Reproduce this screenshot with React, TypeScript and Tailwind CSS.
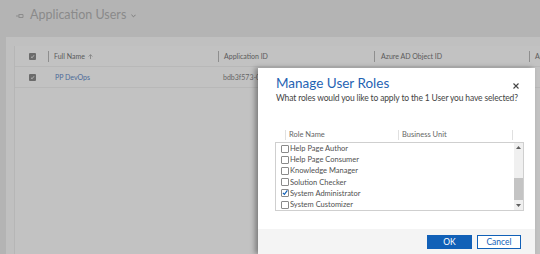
import React from 'react';

const roles = [
  { name: 'Help Page Author', checked: false },
  { name: 'Help Page Consumer', checked: false },
  { name: 'Knowledge Manager', checked: false },
  { name: 'Solution Checker', checked: false },
  { name: 'System Administrator', checked: true },
  { name: 'System Customizer', checked: false },
];

const DimCheck: React.FC = () => (
  <div className="w-[7px] h-[7px] bg-[#6b6b6b] rounded-[1px] flex items-center justify-center">
    <svg width="5" height="5" viewBox="0 0 10 10">
      <path d="M2 5.5 L4.2 7.5 L8 2.5" stroke="#c8c8c8" strokeWidth="1.6" fill="none" />
    </svg>
  </div>
);

const RoleBox: React.FC<{ checked: boolean }> = ({ checked }) => (
  <div className="w-[8px] h-[8px] border border-[#8a8a8a] bg-white rounded-[1px] flex items-center justify-center shrink-0">
    {checked && (
      <svg width="7" height="7" viewBox="0 0 10 10" className="-mt-[1px]">
        <path d="M1.5 5.5 L4 8 L9 1.5" stroke="#1160b7" strokeWidth="2" fill="none" />
      </svg>
    )}
  </div>
);

const App: React.FC = () => {
  return (
    <div className="relative w-[540px] h-[254px] overflow-hidden bg-[#b4b4b4] font-['Lato','Segoe_UI',sans-serif] whitespace-nowrap">
      {/* page header */}
      <div className="h-[37px] flex items-center pl-[16px] pb-[7px]">
        <svg width="8" height="6" viewBox="0 0 8 6" className="mt-[2px]">
          <path d="M0 3 H3 M3 1 V5 M3 1.5 H7 V4.5 H3" stroke="#8c8c8c" strokeWidth="1" fill="none" />
        </svg>
        <span className="ml-[6px] text-[12.5px] text-[#8a8a8a]">Application Users</span>
        <svg width="5" height="4" viewBox="0 0 6 4" className="ml-[5px] mt-[1px]">
          <path d="M0.5 0.5 L3 3 L5.5 0.5" stroke="#7c7c7c" strokeWidth="1.2" fill="none" />
        </svg>
      </div>

      {/* grid panel */}
      <div className="ml-[6px] h-[217px] bg-[#c0c0c0] pl-[8px] pt-[9px]">
        <div className="h-full border-l border-[#b6b6b6] bg-[#c2c2c2]">
          <div className="h-[21px] flex items-center border-b border-[#b8b8b8] text-[7px] text-[#5a5a5a]">
            <div className="w-[33px] shrink-0 flex justify-center pl-[1px]"><DimCheck /></div>
            <div className="w-[170px] shrink-0 flex items-center gap-[5px]">
              <div className="w-px h-[11px] bg-[#8e8e8e]" />
              <span>Full Name</span>
              <svg width="5" height="5" viewBox="0 0 6 6" className="-ml-[2px]">
                <path d="M3 6 V0.8 M0.8 3 L3 0.8 L5.2 3" stroke="#7a7a7a" strokeWidth="0.9" fill="none" />
              </svg>
            </div>
            <div className="w-[156px] shrink-0 flex items-center gap-[5px]">
              <div className="w-px h-[11px] bg-[#8e8e8e]" />
              <span>Application ID</span>
            </div>
            <div className="w-[155px] shrink-0 flex items-center gap-[6px]">
              <div className="w-px h-[11px] bg-[#8e8e8e]" />
              <span>Azure AD Object ID</span>
            </div>
            <div className="shrink-0 flex items-center gap-[5px]">
              <div className="w-px h-[11px] bg-[#8e8e8e]" />
              <span>Application</span>
            </div>
          </div>
          <div className="h-[21px] flex items-center border-b border-[#b8b8b8] text-[7px]">
            <div className="w-[33px] shrink-0 flex justify-center pl-[1px]"><DimCheck /></div>
            <div className="w-[170px] shrink-0 pl-[7px] text-[#4c6a99]">PP DevOps</div>
            <div className="shrink-0 pl-[5px] text-[#666]">bdb3f573-0a1c-4d2e</div>
          </div>
        </div>
      </div>

      {/* dialog */}
      <div className="absolute left-[258px] top-[68px] w-[277px] h-[186px] bg-white shadow-[-3px_0_5px_rgba(0,0,0,0.35)] flex flex-col">
        <div className="relative px-[18px] pt-[6px]">
          <div className="text-[13.5px] leading-[18px] text-[#1f63b3]">Manage User Roles</div>
          <div className="text-[8.5px] leading-[11px] tracking-[-0.15px] text-[#444] mt-[1px]">What roles would you like to apply to the 1 User you have selected?</div>
          <svg width="6" height="6" viewBox="0 0 6 6" className="absolute left-[255px] top-[15px]">
            <path d="M0.5 0.5 L5.5 5.5 M5.5 0.5 L0.5 5.5" stroke="#444" strokeWidth="1.1" />
          </svg>
        </div>

        <div className="mt-[26px] ml-[27px] flex items-center h-[10px] text-[7.5px] text-[#666]">
          <div className="w-[113px] flex items-center gap-[3px]">
            <div className="w-px h-[10px] bg-[#e0e0e0]" />
            <span>Role Name</span>
          </div>
          <div className="w-[114px] flex items-center gap-[3px]">
            <div className="w-px h-[10px] bg-[#e0e0e0]" />
            <span>Business Unit</span>
          </div>
          <div className="w-px h-[10px] bg-[#e0e0e0]" />
        </div>

        <div className="mt-[2px] ml-[17px] w-[249px] h-[69px] border border-[#cfcfcf] flex">
          <div className="flex-1 pl-[5px] text-[7.5px] text-[#505050]">
            {roles.map(r => (
              <div key={r.name} className="h-[11.2px] flex items-center gap-[1px]">
                <RoleBox checked={r.checked} />
                <span>{r.name}</span>
              </div>
            ))}
          </div>
          <div className="w-[9px] bg-[#f0f0f0] flex flex-col items-center">
            <div className="h-[9px] flex items-center justify-center">
              <svg width="5" height="3" viewBox="0 0 5 3"><path d="M0 3 L2.5 0 L5 3 Z" fill="#606060" /></svg>
            </div>
            <div className="h-[26px]" />
            <div className="w-full h-[22px] bg-[#c4c4c4]" />
            <div className="flex-1 flex items-center justify-center">
              <svg width="5" height="3" viewBox="0 0 5 3"><path d="M0 0 L2.5 3 L5 0 Z" fill="#606060" /></svg>
            </div>
          </div>
        </div>

        <div className="mt-auto h-[25px] bg-[#f4f4f4] flex items-start justify-end gap-[5px] pt-[6px] pr-[14px] text-[8.5px]">
          <button className="w-[45px] h-[14px] bg-[#1160b7] text-white flex items-center justify-center">OK</button>
          <button className="w-[44px] h-[14px] bg-white border border-[#1160b7] text-[#1160b7] flex items-center justify-center">Cancel</button>
        </div>
      </div>
    </div>
  );
};

export default App;
